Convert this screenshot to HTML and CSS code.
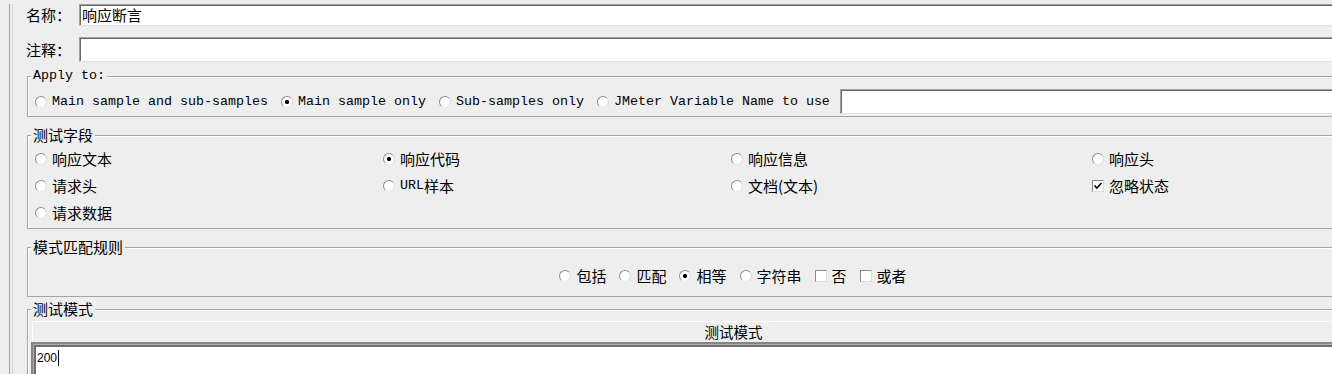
FILE: index.html
```html
<!DOCTYPE html>
<html lang="zh-CN">
<head>
    <meta charset="UTF-8">
    <title>响应断言</title>
    <link rel="stylesheet" href="styles.css">
</head>
<body>

<div class="page">
  <div class="split">
    <div class="pane">

      <!-- Name / comment -->
      <div class="field-row">
        <label class="field-label">名称：</label>
        <div class="text-input">响应断言</div>
      </div>
      <div class="field-row comment-row">
        <label class="field-label">注释：</label>
        <div class="text-input"></div>
      </div>

      <!-- Apply to -->
      <fieldset class="group apply">
        <legend class="mono">Apply to:</legend>
        <div class="apply-row mono">
          <span class="option"><span class="radio"></span>Main sample and sub-samples</span>
          <span class="option"><span class="radio on"></span>Main sample only</span>
          <span class="option"><span class="radio"></span>Sub-samples only</span>
          <span class="option last"><span class="radio"></span>JMeter Variable Name to use</span>
          <div class="text-input var-input"></div>
        </div>
      </fieldset>

      <!-- Field to test -->
      <fieldset class="group fields">
        <legend>测试字段</legend>
        <div class="field-grid">
          <span class="option"><span class="radio"></span>响应文本</span>
          <span class="option"><span class="radio on"></span>响应代码</span>
          <span class="option"><span class="radio"></span>响应信息</span>
          <span class="option"><span class="radio"></span>响应头</span>
          <span class="option"><span class="radio"></span>请求头</span>
          <span class="option"><span class="radio"></span><span class="mono">URL</span>样本</span>
          <span class="option"><span class="radio"></span>文档(文本)</span>
          <span class="option"><span class="check"><svg width="10" height="10" viewBox="0 0 10 10"><path d="M1.5 4.5 L3.8 7 L8.5 2" fill="none" stroke="#000" stroke-width="1.6"/></svg></span>忽略状态</span>
          <span class="option"><span class="radio"></span>请求数据</span>
        </div>
      </fieldset>

      <!-- Pattern matching rules -->
      <fieldset class="group match">
        <legend>模式匹配规则</legend>
        <div class="match-row">
          <span class="option"><span class="radio"></span>包括</span>
          <span class="option"><span class="radio"></span>匹配</span>
          <span class="option"><span class="radio on"></span>相等</span>
          <span class="option"><span class="radio"></span>字符串</span>
          <span class="option"><span class="check"></span>否</span>
          <span class="option last"><span class="check"></span>或者</span>
        </div>
      </fieldset>

      <!-- Patterns to test -->
      <fieldset class="group pattern">
        <legend>测试模式</legend>
        <div class="table-head">测试模式</div>
        <div class="table-body">
          <div class="cell">200<span class="caret"></span></div>
        </div>
      </fieldset>

    </div>
  </div>
</div>

</body>
</html>
```

FILE: styles.css
```css
body {
    margin: 0;
    background-color: #eeeeee;
    overflow: hidden;
    font-family: "Noto Sans CJK SC", sans-serif;
    font-size: 15px;
    color: #000;
}

.mono {
    font-family: "Liberation Mono", monospace;
    font-size: 13.33px;
}

.page {
    width: 1452px;
    height: 374px;
    padding: 4px 0 0 9px;
    box-sizing: border-box;
}

.split {
    height: 100%;
    border-left: 1px solid #a0a0a0;
    padding-left: 2px;
}

.pane {
    height: 100%;
    border-left: 1px solid #d4d4d4;
    padding: 0 13px;
}

/* Name and comment rows */
.field-row {
    display: flex;
    align-items: center;
    height: 22px;
}

.comment-row {
    margin-top: 11px;
    height: 25px;
}

.field-label {
    width: 53px;
    line-height: 18px;
}

.text-input {
    flex: 1;
    height: 100%;
    box-sizing: border-box;
    border: 1px solid;
    border-color: #a0a0a0 #e3e3e3 #e3e3e3 #a0a0a0;
    box-shadow: inset 1px 1px 0 #696969;
    background-color: #fff;
    padding: 0 2px;
    line-height: 20px;
}

/* Etched group boxes */
.group {
    margin: 0 0 0 1px;
    padding: 0 0 0 4px;
    border: 1px solid #a5a5a5;
    box-shadow: inset 1px 1px 0 #fff;
    min-width: 0;
}

.group legend {
    margin-left: -1px;
    padding: 0 2px;
    line-height: 16px;
    background-color: #eeeeee;
}

.option {
    display: inline-flex;
    align-items: center;
    white-space: nowrap;
    line-height: 18px;
}

.radio,
.check {
    flex: none;
    width: 12px;
    height: 12px;
    box-sizing: border-box;
    border: 1px solid;
    border-color: #8f8f8f #dadada #e8e8e8 #8f8f8f;
    background-color: #fff;
    margin-right: 5px;
}

.radio {
    border-radius: 50%;
}

.radio.on {
    background: radial-gradient(circle, #000 0 1.8px, #fff 2.4px);
}

.check {
    display: flex;
    align-items: center;
    justify-content: center;
    border-color: #8a8a8a #dcdcdc #dcdcdc #8a8a8a;
}

/* Apply to */
.apply {
    margin-top: 6px;
    padding-top: 5px;
    padding-bottom: 2px;
}

.apply-row {
    display: flex;
    align-items: center;
    height: 25px;
    padding-left: 3px;
}

.apply-row .option {
    margin-right: 13px;
}

.apply-row .option.last {
    margin-right: 10px;
}

.var-input {
    height: 25px;
}

/* Field to test */
.fields {
    margin-top: 10px;
    padding-top: 2px;
    padding-bottom: 2px;
}

.field-grid {
    display: grid;
    grid-template-columns: 348px 348px 361px 1fr;
    grid-auto-rows: 27px;
    align-items: center;
    padding-left: 3px;
}

/* Pattern matching rules */
.match {
    margin-top: 10px;
    padding: 11px 4px 10px;
}

.match-row {
    display: flex;
    justify-content: center;
    align-items: center;
    height: 20px;
}

.match-row .option {
    margin-right: 13px;
}

.match-row .option.last {
    margin-right: 0;
}

/* Patterns to test */
.pattern {
    margin-top: 4px;
    padding: 4px 4px 0;
    height: 80px;
}

.table-head {
    height: 21px;
    box-sizing: border-box;
    border-top: 1px solid #fff;
    border-left: 1px solid #fff;
    text-align: center;
    line-height: 20px;
    font-size: 14.5px;
}

.table-body {
    margin-left: -1px;
    border-top: 2px solid #858585;
    border-left: 2px solid #858585;
    background-color: #fff;
    height: 60px;
}

.cell {
    height: 100%;
    box-sizing: border-box;
    border-top: 1px solid #adadad;
    border-left: 1px solid #adadad;
    box-shadow: inset 2px 2px 0 #6e6e6e;
    padding: 5px 0 0 3px;
    font-family: "Liberation Sans", sans-serif;
    font-size: 12px;
    line-height: 16px;
}

.caret {
    display: inline-block;
    width: 1px;
    height: 16px;
    margin-left: 1px;
    background-color: #000;
    vertical-align: top;
}
```
